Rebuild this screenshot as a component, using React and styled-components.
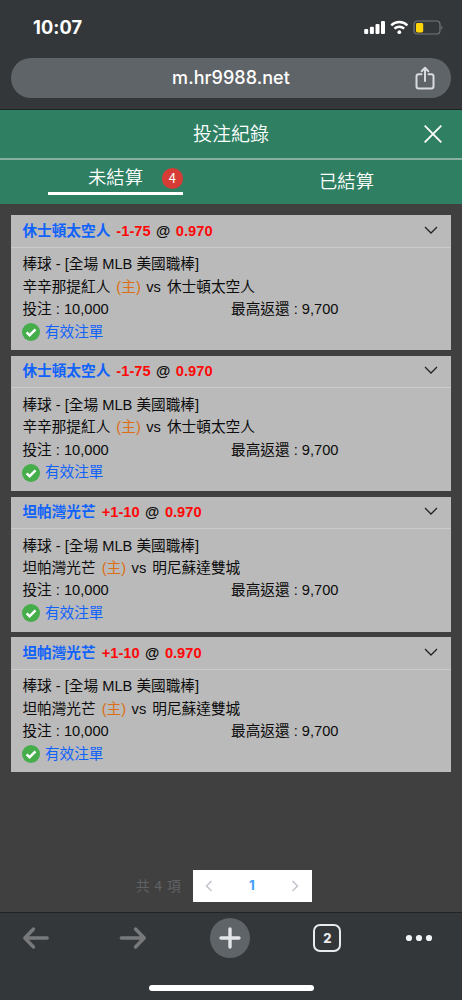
import React from 'react'
import styled, { createGlobalStyle } from 'styled-components'

const GlobalStyle = createGlobalStyle`
    *{
        box-sizing: border-box;
    }
    body{
        margin: 0;
        background-color: #404040;
    }
`;

//Styled-components

const Page = styled.div`
    width: 462px;
    height: 1000px;
    display: flex;
    flex-direction: column;
    overflow: hidden;
    background-color: #404040;
    font-family: 'Liberation Sans', 'Noto Sans CJK TC', sans-serif;
`;

const BrowserTop = styled.div`
    height: 110px;
    flex: none;
    padding: 0 11px;
    background-color: #34373a;
    border-bottom: 1px solid #202324;
`;

const StatusBar = styled.div`
    height: 58px;
    display: flex;
    justify-content: space-between;
    padding: 17px 8px 0 22px;
`;

const Clock = styled.span`
    color: white;
    font-family: 'Inter', sans-serif;
    font-size: 18.2px;
    font-weight: 700;
    line-height: 21px;
    letter-spacing: 0.1px;
`;

const AddressBar = styled.div`
    height: 40px;
    display: grid;
    grid-template-columns: 1fr auto 1fr;
    align-items: center;
    border-radius: 20px;
    padding: 0 16px;
    background-color: #5f6468;
    svg{
        justify-self: end;
    }
`;

const Url = styled.span`
    grid-column: 2;
    padding-bottom: 1px;
    color: white;
    font-family: 'Inter', sans-serif;
    font-size: 18px;
    font-weight: 500;
    line-height: 22px;
    letter-spacing: 0.05px;
`;

const Header = styled.div`
    height: 50px;
    flex: none;
    display: grid;
    grid-template-columns: 1fr auto 1fr;
    align-items: center;
    padding-right: 20px;
    background-color: #2f8063;
    border-bottom: 2px solid #87b09f;
    svg{
        justify-self: end;
    }
`;

const Title = styled.h1`
    grid-column: 2;
    margin: 1px 0 0 20px;
    color: white;
    font-size: 19px;
    font-weight: 350;
    line-height: 28px;
`;

const Tabs = styled.div`
    height: 44px;
    flex: none;
    display: flex;
    background-color: #2f8063;
`;

const Tab = styled.div`
    flex: 1;
    display: flex;
    justify-content: center;
    color: white;
    font-size: 18.3px;
    font-weight: 350;
    line-height: 43px;
`;

const TabLabel = styled.div`
    position: relative;
    width: 135px;
    height: 35px;
    text-align: center;
    line-height: 36px;
    border-bottom: ${props => props.$active ? '3px solid white' : 'none'};
`;

const Badge = styled.span`
    position: absolute;
    right: 0;
    top: 8px;
    width: 21.5px;
    height: 20.5px;
    border-radius: 50%;
    background-color: #d63b35;
    font-family: 'Noto Sans CJK TC', sans-serif;
    font-size: 13px;
    font-weight: 400;
    line-height: 20px;
`;

const List = styled.div`
    height: 666px;
    flex: none;
    display: flex;
    flex-direction: column;
    gap: 5.7px;
    padding: 11.3px 11px 0;
`;

const Card = styled.div`
    height: 135px;
    flex: none;
    background-color: #bababa;
    color: #0c0c0c;
    font-size: 14.67px;
`;

const CardHead = styled.div`
    height: 32.5px;
    display: flex;
    align-items: center;
    justify-content: space-between;
    padding: 0 13px 4px 11.4px;
    border-bottom: 1px solid #cbcbcb;
    font-weight: 700;
    white-space: pre;
    svg{
        margin-top: 1px;
    }
`;

const Team = styled.span`
    color: #0f62fb;
    margin-right: 6px;
`;

const Odds = styled.span`
    color: #ff0808;
`;

const At = styled.span`
    margin: 0 5.5px;
`;

const CardBody = styled.div`
    padding: 5.5px 11.4px 0;
    line-height: 22.5px;
`;

const Line = styled.div`
    height: 22.4px;
    display: flex;
    white-space: pre;
`;

const Home = styled.span`
    color: #dc6e14;
    margin: 0 5.5px 0 6px;
`;

const Away = styled.span`
    margin-left: 6px;
`;

const Half = styled.span`
    width: 208.6px;
`;

const Valid = styled.div`
    height: 23px;
    display: flex;
    align-items: center;
    gap: 4.5px;
    color: #0f62fb;
`;

const Pagination = styled.div`
    height: 42px;
    flex: none;
    display: flex;
    padding-left: 136px;
`;

const Total = styled.span`
    width: 56.5px;
    color: #606266;
    font-family: 'Noto Sans CJK TC', sans-serif;
    font-size: 13.7px;
    font-weight: 400;
    line-height: 31px;
    letter-spacing: 0.9px;
    white-space: nowrap;
`;

const Pager = styled.div`
    width: 119px;
    height: 32px;
    display: flex;
    align-items: center;
    justify-content: space-between;
    padding: 0 12px;
    background-color: white;
`;

const PageNumber = styled.span`
    color: #409eff;
    font-family: 'Inter', sans-serif;
    font-size: 13.5px;
    font-weight: 700;
    line-height: 15px;
    padding-bottom: 1px;
`;

const BrowserBottom = styled.div`
    height: 88px;
    flex: none;
    display: flex;
    flex-direction: column;
    align-items: center;
    background-color: #34373a;
    border-top: 1px solid #202223;
`;

const Toolbar = styled.div`
    width: 100%;
    height: 49px;
    display: flex;
    align-items: center;
    justify-content: space-between;
    padding: 0 29.5px 0 22px;
    & > :first-child{
        margin-right: 6px;
    }
`;

const NewTab = styled.div`
    width: 40px;
    height: 40px;
    display: flex;
    align-items: center;
    justify-content: center;
    border-radius: 50%;
    background-color: #5f6468;
`;

const TabCount = styled.div`
    width: 28px;
    height: 28px;
    border: 2.5px solid #e8eaed;
    border-radius: 7px;
    color: #e8eaed;
    font-family: 'Inter', sans-serif;
    font-size: 13px;
    font-weight: 800;
    line-height: 24px;
    text-align: center;
`;

const HomeIndicator = styled.div`
    width: 165px;
    height: 5.5px;
    margin-top: 23px;
    border-radius: 3px;
    background-color: white;
`;

const bets = [
    { id: 1, team: '休士頓太空人', odds: '-1-75', home: '辛辛那提紅人', away: '休士頓太空人' },
    { id: 2, team: '休士頓太空人', odds: '-1-75', home: '辛辛那提紅人', away: '休士頓太空人' },
    { id: 3, team: '坦帕灣光芒', odds: '+1-10', home: '坦帕灣光芒', away: '明尼蘇達雙城' },
    { id: 4, team: '坦帕灣光芒', odds: '+1-10', home: '坦帕灣光芒', away: '明尼蘇達雙城' },
]

function StatusIcons(){
    return (
        <svg width='80' height='22' viewBox='0 0 80 22'>
            <g fill='white'>
                <rect x='1.2' y='12' width='4' height='5' rx='1.1' />
                <rect x='6.9' y='9.7' width='4' height='7.3' rx='1.1' />
                <rect x='12.5' y='7' width='4' height='10' rx='1.1' />
                <rect x='18' y='4' width='4' height='13' rx='1.1' />
                <circle cx='36.3' cy='15.2' r='1.9' />
            </g>
            <path d='M28.2 8.3C32.8 3.9 39.8 3.9 44.4 8.3M31.4 11.7C34.2 9.1 38.4 9.1 41.2 11.7' fill='none' stroke='white' strokeWidth='2.4' />
            <rect x='51' y='4' width='26' height='13' rx='3.5' fill='none' stroke='#74777a' strokeWidth='1.2' />
            <rect x='53' y='6' width='7.2' height='9.4' rx='1.4' fill='#ffd60a' />
            <path d='M78.4 8.7V12.4C79.9 11.6 79.9 9.5 78.4 8.7Z' fill='#74777a' />
        </svg>
    )
}

function Arrow({ right }){
    return (
        <svg width='28' height='24' viewBox='0 0 28 24' fill='none' stroke='#77797b' strokeWidth='3.4' strokeLinecap='round' strokeLinejoin='round'>
            <path d={right ? 'M2.3 12H25M16.5 3L25.2 12L16.5 21' : 'M25.2 12H3M11.5 3L2.8 12L11.5 21'} />
        </svg>
    )
}

function Bet({ bet }){
    return (
        <Card>
            <CardHead>
                <div>
                    <Team>{bet.team}</Team>
                    <Odds>{bet.odds}</Odds>
                    <At>@</At>
                    <Odds>0.970</Odds>
                </div>
                <svg width='14' height='8' viewBox='0 0 14 8' fill='none' stroke='#222' strokeWidth='1.3'>
                    <path d='M1 1L7 7L13 1' />
                </svg>
            </CardHead>
            <CardBody>
                <Line>棒球 - [全場 MLB 美國職棒]</Line>
                <Line>{bet.home}<Home>(主)</Home>vs<Away>{bet.away}</Away></Line>
                <Line><Half>投注 : 10,000</Half><span>最高返還 : 9,700</span></Line>
                <Valid>
                    <svg width='18' height='18' viewBox='0 0 18 18'>
                        <circle cx='9' cy='9' r='9' fill='#46ad4b' />
                        <path d='M4.6 9.3L7.6 12.2L13.5 6.3' fill='none' stroke='white' strokeWidth='2.4' />
                    </svg>
                    有效注單
                </Valid>
            </CardBody>
        </Card>
    )
}

export default function App(){
    return (
        <Page>
            <GlobalStyle />
            <BrowserTop>
                <StatusBar>
                    <Clock>10:07</Clock>
                    <StatusIcons />
                </StatusBar>
                <AddressBar>
                    <Url>m.hr9988.net</Url>
                    <svg width='20' height='24' viewBox='0 0 20 24' fill='none' stroke='#d9dbde' strokeWidth='2' strokeLinecap='round' strokeLinejoin='round'>
                        <path d='M6.5 8.3H3.7Q1.5 8.3 1.5 10.5V20.2Q1.5 22.4 3.7 22.4H16.3Q18.5 22.4 18.5 20.2V10.5Q18.5 8.3 16.3 8.3H13.5M10 15V2M6.7 5.2L10 1.8L13.3 5.2' />
                    </svg>
                </AddressBar>
            </BrowserTop>
            <Header>
                <Title>投注紀錄</Title>
                <svg width='18' height='18' viewBox='0 0 18 18' stroke='white' strokeWidth='1.8'>
                    <path d='M.7.7L17.3 17.3M17.3.7L.7 17.3' />
                </svg>
            </Header>
            <Tabs>
                <Tab><TabLabel $active>未結算<Badge>4</Badge></TabLabel></Tab>
                <Tab>已結算</Tab>
            </Tabs>
            <List>
                {bets.map(bet => <Bet key={bet.id} bet={bet} />)}
            </List>
            <Pagination>
                <Total>共 4 項</Total>
                <Pager>
                    <svg width='8' height='12' viewBox='0 0 8 12' fill='none' stroke='#c0c4cc' strokeWidth='1.5'>
                        <path d='M6.5 1L1.5 6L6.5 11' />
                    </svg>
                    <PageNumber>1</PageNumber>
                    <svg width='8' height='12' viewBox='0 0 8 12' fill='none' stroke='#c0c4cc' strokeWidth='1.5'>
                        <path d='M1.5 1L6.5 6L1.5 11' />
                    </svg>
                </Pager>
            </Pagination>
            <BrowserBottom>
                <Toolbar>
                    <Arrow />
                    <Arrow right />
                    <NewTab>
                        <svg width='22' height='22' viewBox='0 0 22 22' stroke='#e2e4e7' strokeWidth='3.4' strokeLinecap='round'>
                            <path d='M11 2V20M2 11H20' />
                        </svg>
                    </NewTab>
                    <TabCount>2</TabCount>
                    <svg width='28' height='8' viewBox='0 0 28 8' fill='#f1f3f5'>
                        <circle cx='4' cy='4' r='3.1' />
                        <circle cx='14' cy='4' r='3.1' />
                        <circle cx='24' cy='4' r='3.1' />
                    </svg>
                </Toolbar>
                <HomeIndicator />
            </BrowserBottom>
        </Page>
    )
}
